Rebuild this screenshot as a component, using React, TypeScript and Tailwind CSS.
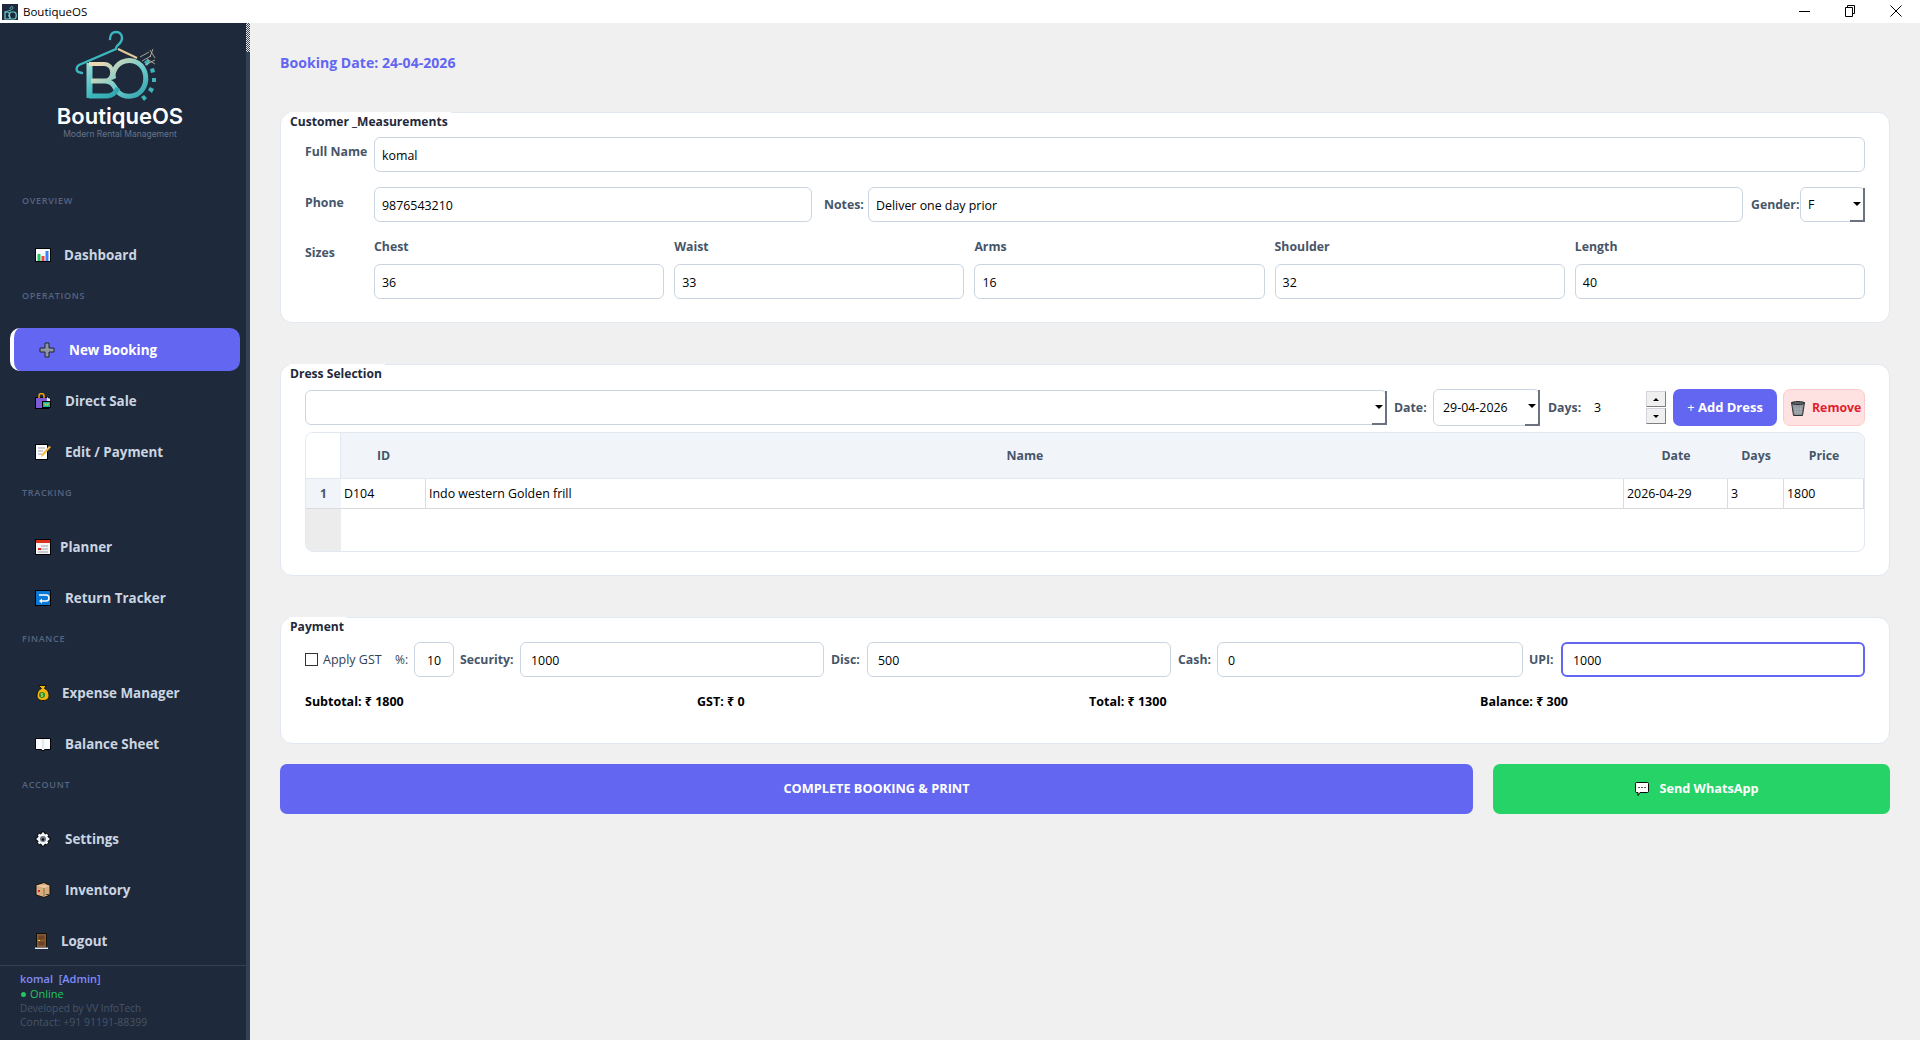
// BoutiqueOS desktop window, New Booking screen

import type { ReactNode } from 'react'

const FONT = "font-['Open_Sans','Noto_Sans','DejaVu_Sans',sans-serif]"

function Emoji({ children, className = 'w-4 h-4' }: { children: ReactNode; className?: string }) {
  return (
    <svg viewBox="0 0 16 16" className={`${className} shrink-0`}>
      {children}
    </svg>
  )
}

const icons: Record<string, ReactNode> = {
  chart: (
    <Emoji>
      <rect x="0.5" y="1.5" width="15" height="13" fill="#f8fafc" stroke="#000" />
      <rect x="2.5" y="7" width="3" height="7" fill="#22c55e" />
      <rect x="6.5" y="9" width="3" height="5" fill="#ef4444" />
      <rect x="10.5" y="4" width="3" height="10" fill="#3b82f6" />
    </Emoji>
  ),
  plus: (
    <Emoji>
      <path d="M6 1h4v5h5v4h-5v5H6v-5H1V6h5z" fill="#8f96a3" stroke="#23272f" strokeWidth="1" />
    </Emoji>
  ),
  bags: (
    <Emoji>
      <rect x="0.5" y="4.5" width="13" height="11" fill="#7c5cd6" stroke="#000" />
      <path d="M4 5V3a2.5 2.5 0 0 1 5 0v2" fill="none" stroke="#f59e0b" strokeWidth="1.5" />
      <rect x="7.5" y="8.5" width="8" height="6" fill="#14b8a6" stroke="#000" />
      <path d="M10 10v2h3v-2" fill="none" stroke="#facc15" />
      <path d="M12 4l3 2v2h-3z" fill="#e2e8f0" />
    </Emoji>
  ),
  memo: (
    <Emoji>
      <rect x="0.5" y="0.5" width="12" height="15" fill="#fff" stroke="#000" />
      <path d="M3 4h7M3 7h5M3 10h4" stroke="#9ca3af" />
      <path d="M6 13l1-3 7-8 2 1-7 8z" fill="#f5b942" />
    </Emoji>
  ),
  calendar: (
    <Emoji>
      <rect x="0.5" y="0.5" width="15" height="15" fill="#f5f5f4" stroke="#000" />
      <rect x="1" y="1" width="14" height="3" fill="#e0301e" />
      <path d="M6 7h7M3 10h10M3 13h10" stroke="#9ca3af" />
      <rect x="3" y="9" width="3" height="2" fill="#dc2626" />
    </Emoji>
  ),
  returnArrow: (
    <Emoji>
      <rect x="0.5" y="0.5" width="15" height="15" fill="#0a78d6" stroke="#000" />
      <path d="M4 5h7a2.5 2.5 0 0 1 0 6H5" fill="none" stroke="#fff" strokeWidth="1.5" />
      <path d="M7 8.5L4 11l3 2.5z" fill="#fff" />
    </Emoji>
  ),
  money: (
    <Emoji>
      <path d="M3 0.500h8l-1.500 3c3 1 4.500 4 4.500 7 0 3-2 5-6 5s-6-2-6-5c0-3 1.500-6 4.500-7z" fill="#f5b50a" stroke="#111" />
      <circle cx="7" cy="10" r="3" fill="#168a3a" />
      <path d="M8.200 8.700H6.200v1.300h1.600v1.300H5.800" fill="none" stroke="#f5e663" strokeWidth="0.800" />
    </Emoji>
  ),
  book: (
    <Emoji>
      <path d="M0.5 2.5h15v11h-6v1h-3v-1h-6z" fill="#f8fafc" stroke="#000" />
      <path d="M8 3v10" stroke="#cbd5e1" />
    </Emoji>
  ),
  gear: (
    <Emoji>
      <path
        d="M6.5 1h3l.5 2 1.7-.8 2 2-.8 1.800 2 .5v3l-2 .5.8 1.800-2 2-1.700-.8-.5 2h-3l-.5-2-1.700.8-2-2 .8-1.800-2-.5v-3l2-.5-.8-1.800 2-2L6 3z"
        fill="#f1f5f9"
        stroke="#000"
      />
      <circle cx="8" cy="8" r="3" fill="#6b7280" />
      <circle cx="8" cy="8.500" r="1.300" fill="#111" />
    </Emoji>
  ),
  box: (
    <Emoji>
      <path d="M1 3l8-2.500 6 3V13l-6 2.500L1 13z" fill="#d7ac7e" stroke="#111" />
      <path d="M1 3l8 3 6-2.500" fill="#eacda8" />
      <path d="M9 6v9" stroke="#8b6a45" />
      <rect x="3" y="8" width="2" height="2" fill="#dc2626" />
      <rect x="11" y="12" width="3" height="1" fill="#3f3f46" />
    </Emoji>
  ),
  door: (
    <Emoji>
      <rect x="1.500" y="0.500" width="10" height="14" fill="#8a5a33" stroke="#111" />
      <rect x="3.500" y="2.500" width="6" height="4" fill="#6b4226" />
      <rect x="3.500" y="8.500" width="6" height="4" fill="#6b4226" />
      <rect x="3" y="7" width="2" height="1" fill="#facc15" />
      <rect x="0" y="14.500" width="13" height="1.500" fill="#e5e7eb" />
    </Emoji>
  ),
}

type NavItem = { type: 'item'; label: string; icon: string; iconBox: string }
type NavHeading = { type: 'heading'; label: string }

const nav: (NavItem | NavHeading)[] = [
  { type: 'heading', label: 'OVERVIEW' },
  { type: 'item', label: 'Dashboard', icon: 'chart', iconBox: 'w-[29px]' },
  { type: 'heading', label: 'OPERATIONS' },
  { type: 'item', label: 'New Booking', icon: 'plus', iconBox: 'w-[30px]' },
  { type: 'item', label: 'Direct Sale', icon: 'bags', iconBox: 'w-[30px]' },
  { type: 'item', label: 'Edit / Payment', icon: 'memo', iconBox: 'w-[30px]' },
  { type: 'heading', label: 'TRACKING' },
  { type: 'item', label: 'Planner', icon: 'calendar', iconBox: 'w-[25px]' },
  { type: 'item', label: 'Return Tracker', icon: 'returnArrow', iconBox: 'w-[30px]' },
  { type: 'heading', label: 'FINANCE' },
  { type: 'item', label: 'Expense Manager', icon: 'money', iconBox: 'w-[27px]' },
  { type: 'item', label: 'Balance Sheet', icon: 'book', iconBox: 'w-[30px]' },
  { type: 'heading', label: 'ACCOUNT' },
  { type: 'item', label: 'Settings', icon: 'gear', iconBox: 'w-[30px]' },
  { type: 'item', label: 'Inventory', icon: 'box', iconBox: 'w-[30px]' },
  { type: 'item', label: 'Logout', icon: 'door', iconBox: 'w-[26px]' },
]

function Logo() {
  return (
    <svg viewBox="0 0 110 80" className="w-[110px] h-[80px]" fill="none">
      <defs>
        <linearGradient id="bo" gradientUnits="userSpaceOnUse" x1="20" y1="36" x2="60" y2="76">
          <stop offset="0" stopColor="#a9e4dc" />
          <stop offset="0.5" stopColor="#3fb8bd" />
          <stop offset="1" stopColor="#2a9aa4" />
        </linearGradient>
        <linearGradient id="cream" gradientUnits="userSpaceOnUse" x1="40" y1="34" x2="70" y2="74">
          <stop offset="0" stopColor="#ecd9b4" />
          <stop offset="0.6" stopColor="#6ccccb" />
          <stop offset="1" stopColor="#3aa9b1" />
        </linearGradient>
      </defs>
      {/* hanger */}
      <path
        d="M45 14c0-5 3-7 6-7 4 0 6 3 6 6 0 4-3 6-5 8-1 1-1 2-1 3L14 40c-3 2-3 5-1 7l4 1"
        stroke="#3db7bf"
        strokeWidth="2.400"
        strokeLinecap="round"
      />
      <path d="M53 24l19 9" stroke="#e2c99c" strokeWidth="2" />
      {/* B */}
      <path d="M24.500 38v35" stroke="url(#bo)" strokeWidth="6" />
      <path d="M24 39h15c11 0 11 17 0 17H26" stroke="url(#cream)" strokeWidth="4" />
      <path
        d="M26 56h14c8 0 9 6 13 11 6 6 18 6 24-2 6-8 5-21-4-27-8-5-19-2-23 6-3 5-2 8-1 10"
        stroke="url(#cream)"
        strokeWidth="5"
      />
      <path d="M24 71h18c6 0 9-4 11-8" stroke="url(#bo)" strokeWidth="5" />
      {/* gear teeth */}
      <path
        d="M79 37l4-3 2 3-3 4zM85 44l4-1 1 4-4 1zM87 53h4v4h-4zM85 62l4 2-2 4-4-3zM79 70l3 3-3 3-3-4z"
        fill="#3fb3ba"
      />
      {/* needle marks */}
      <path
        d="M75 32l9-5M77 36l9-5M80 40l10-5M85 25l5 8M88 24l-3 8M82 34l8 5"
        stroke="#c9c1a8"
        strokeWidth="0.800"
      />
    </svg>
  )
}

function Sidebar() {
  return (
    <aside className="flex w-[250px] shrink-0 bg-[#1e293b]">
      <div className="flex w-[246px] flex-col">
        <div className="mt-[2px] flex flex-col items-center pr-[6px]">
          <Logo />
          <div className="h-[24px] font-['Inter',sans-serif] text-[22px] font-semibold leading-[23px] text-white">
            BoutiqueOS
          </div>
          <div className="h-[10px] font-['Inter',sans-serif] text-[8.500px] leading-[10px] text-[#64748b]">
            Modern Rental Management
          </div>
        </div>
        <nav className="mt-[54px] flex flex-col">
          {nav.map((n) => {
            if (n.type === 'heading') {
              return (
                <div
                  key={n.label}
                  className="mb-[25px] mt-[4px] h-[15px] pl-[22px] text-[9px] font-semibold leading-[15px] tracking-[0.7px] text-[#566580] first:mt-0"
                >
                  {n.label}
                </div>
              )
            }
            const active = n.label === 'New Booking'
            return (
              <div
                key={n.label}
                className={
                  active
                    ? 'mx-[10px] mb-[8px] flex h-[43px] w-[230px] items-center rounded-[10px] border-l-[4px] border-white bg-[#6366f1] pl-[25px] text-[13.400px] font-bold text-white'
                    : 'mb-[8px] flex h-[43px] items-center pl-[35px] text-[13.400px] font-bold text-[#cbd5e1] last:mb-0'
                }
              >
                <span className={`flex ${n.iconBox}`}>{icons[n.icon]}</span>
                <span className="pt-px">{n.label}</span>
              </div>
            )
          })}
        </nav>
        <div className="mt-auto flex h-[75px] flex-col border-t border-[#334155] pl-[20px] pt-[5px]">
          <div className="h-[15px] text-[11px] font-semibold leading-[15px] text-[#818cf8]">komal&nbsp;&nbsp;[Admin]</div>
          <div className="flex h-[15px] items-center gap-[4px] pl-[1px] text-[11px] leading-[15px] text-[#22c55e]">
            <span className="mt-[1px] h-[5px] w-[5px] rounded-full bg-[#22c55e]" />
            Online
          </div>
          <div className="h-[15px] text-[10px] leading-[15px] text-[#475569]">Developed by VV InfoTech</div>
          <div className="h-[13px] text-[10.500px] leading-[13px] text-[#475569]">Contact: +91 91191-88399</div>
        </div>
      </div>
      <div className="w-[4px] bg-[#334155]">
        <div className="h-[29px] bg-[repeating-conic-gradient(#e5e7eb_0_25%,#374151_0_50%)] bg-[length:2px_2px]" />
      </div>
    </aside>
  )
}

function Field({ value, className = '' }: { value: string; className?: string }) {
  return (
    <input
      readOnly
      value={value}
      className={`h-[35px] rounded-[6px] border border-[#cbd5e1] bg-white px-[7px] pt-px text-[12.400px] text-black outline-none ${className}`}
    />
  )
}

function Label({ children, className = '' }: { children: ReactNode; className?: string }) {
  return <span className={`shrink-0 text-[12.300px] font-bold leading-[16px] text-[#475569] ${className}`}>{children}</span>
}

function Combo({ value, className = '' }: { value: string; className?: string }) {
  return (
    <div className={`relative flex items-center rounded-[6px] border border-[#cbd5e1] bg-white pl-[7px] pt-px text-[12.400px] text-black ${className}`}>
      {value}
      <div className="absolute -bottom-px -right-px top-0 w-[15px] border-b-2 border-r-2 border-[#6b7280]">
        <div className="absolute left-[3px] top-[14px] h-0 w-0 border-x-[4px] border-t-[4px] border-x-transparent border-t-black" />
      </div>
    </div>
  )
}

function Card({ title, children, className = '' }: { title: string; children: ReactNode; className?: string }) {
  return (
    <section className={`flex flex-col rounded-[12px] border border-[#e2e8f0] bg-white px-[24px] ${className}`}>
      <div className="-ml-[16px] -mt-px h-[20px] w-fit bg-white pl-[1px] pr-[3px] text-[12.100px] font-bold leading-[20px] text-[#1e293b]">
        {title}
      </div>
      {children}
    </section>
  )
}

function CustomerCard() {
  const sizes = [
    ['Chest', '36'],
    ['Waist', '33'],
    ['Arms', '16'],
    ['Shoulder', '32'],
    ['Length', '40'],
  ]
  return (
    <Card title="Customer _Measurements" className="h-[211px]">
      <div className="mt-[5px] flex">
        <Label className="w-[69px] pt-[7px]">Full Name</Label>
        <Field value="komal" className="flex-1" />
      </div>
      <div className="mt-[15px] flex items-center">
        <Label className="w-[69px] self-start pt-[8px]">Phone</Label>
        <Field value="9876543210" className="w-[438px]" />
        <Label className="ml-[12px] w-[44px]">Notes:</Label>
        <Field value="Deliver one day prior" className="min-w-0 flex-1" />
        <Label className="ml-[8px] w-[49px]">Gender:</Label>
        <Combo value="F" className="h-[35px] w-[65px]" />
      </div>
      <div className="mt-[16px] flex">
        <Label className="w-[69px] pt-[7px]">Sizes</Label>
        <div className="grid flex-1 grid-cols-5 gap-x-[10px]">
          {sizes.map(([label, value]) => (
            <div key={label} className="flex flex-col gap-[9px]">
              <Label className="pt-px">{label}</Label>
              <Field value={value} className="w-full" />
            </div>
          ))}
        </div>
      </div>
    </Card>
  )
}

function DressTable() {
  const cols = 'grid grid-cols-[35px_85px_1198px_104px_56px_80px]'
  const cell = 'flex items-center border-b border-r border-[#d8dbe0] pl-[3px] pt-px text-[12.400px] text-black'
  return (
    <div className="mt-[6px] flex h-[120px] flex-col overflow-hidden rounded-[8px] border border-[#e2e8f0]">
      <div className={`${cols} h-[46px] text-[12.300px] font-bold text-[#475569]`}>
        <div className="border-b border-r border-[#e2e8f0] bg-white" />
        {['ID', 'Name', 'Date', 'Days', 'Price'].map((h) => (
          <div key={h} className="flex items-center justify-center border-b border-[#e2e8f0] bg-[#f1f5f9] pt-px">
            {h}
          </div>
        ))}
      </div>
      <div className={`${cols} h-[30px]`}>
        <div className="flex items-center justify-center border-b border-[#d8dbe0] bg-[#f1f5f9] text-[12px] font-bold text-[#475569]">1</div>
        <div className={cell}>D104</div>
        <div className={cell}>Indo western Golden frill</div>
        <div className={cell}>2026-04-29</div>
        <div className={cell}>3</div>
        <div className={cell}>1800</div>
      </div>
      <div className="flex flex-1">
        <div className="w-[35px] bg-[#ececec]" />
      </div>
    </div>
  )
}

function SpinArrow({ down }: { down?: boolean }) {
  return (
    <div className="flex h-[16px] items-center justify-center border border-[#d1d5db] border-b-[#808080] border-r-[#808080] bg-[#f0f0f0]">
      <div
        className={
          down
            ? 'h-0 w-0 border-x-[3px] border-t-[3px] border-x-transparent border-t-black'
            : 'h-0 w-0 border-x-[3px] border-b-[3px] border-x-transparent border-b-black'
        }
      />
    </div>
  )
}

function DressCard() {
  return (
    <Card title="Dress Selection" className="mt-[41px] h-[212px]">
      <div className="mt-[5px] flex h-[37px] items-center">
        <Combo value="" className="h-[35px] min-w-0 flex-1" />
        <Label className="ml-[7px] w-[39px]">Date:</Label>
        <Combo value="29-04-2026" className="h-[37px] w-[107px] !pl-[9px]" />
        <Label className="ml-[8px] w-[46px]">Days:</Label>
        <span className="w-[52px] pt-px text-[12.400px] text-black">3</span>
        <div className="flex w-[20px] flex-col gap-[1px]">
          <SpinArrow />
          <SpinArrow down />
        </div>
        <button className="ml-[7px] h-[37px] w-[104px] rounded-[7px] bg-[#6366f1] text-[13px] font-bold text-white">
          <span className="font-normal">+</span> Add Dress
        </button>
        <button className="ml-[6px] flex h-[37px] w-[82px] items-center gap-[6px] rounded-[7px] border border-[#fecaca] bg-[#fee2e2] pl-[6px] pt-px text-[12.300px] font-bold text-[#e11d2e]">
          <Emoji>
            <path d="M1.500 2.500h13l-2 13h-9z" fill="#8c9499" stroke="#2b2f33" />
            <ellipse cx="8" cy="3" rx="6.500" ry="1.500" fill="#5b6369" stroke="#2b2f33" />
            <path d="M5 6l1 8M8 6v8M11 6l-1 8M4 9h8M4 12h8" stroke="#b4bbbf" strokeWidth="0.600" />
          </Emoji>
          Remove
        </button>
      </div>
      <DressTable />
    </Card>
  )
}

function PaymentCard() {
  return (
    <Card title="Payment" className="mt-[41px] h-[127px]">
      <div className="mt-[5px] flex h-[35px] items-center">
        <div className="h-[13px] w-[13px] shrink-0 border border-[#333] bg-white" />
        <span className="ml-[5px] w-[72px] shrink-0 pt-px text-[12.500px] text-[#334155]">Apply GST</span>
        <span className="w-[19px] shrink-0 text-[12px] text-[#334155]">%:</span>
        <Field value="10" className="w-[40px] text-center !px-0" />
        <Label className="ml-[6px] w-[60px]">Security:</Label>
        <Field value="1000" className="w-[304px] !pl-[10px]" />
        <Label className="ml-[7px] w-[36px]">Disc:</Label>
        <Field value="500" className="w-[304px] !pl-[10px]" />
        <Label className="ml-[7px] w-[39px]">Cash:</Label>
        <Field value="0" className="w-[306px] !pl-[10px]" />
        <Label className="ml-[6px] w-[32px]">UPI:</Label>
        <Field value="1000" className="min-w-0 flex-1 !border-2 !border-[#6366f1] !pl-[10px]" />
      </div>
      <div className="mt-[17px] grid grid-cols-[392px_392px_391px_1fr] text-[12.500px] font-bold leading-[16px] text-black">
        <span>Subtotal: ₹ 1800</span>
        <span>GST: ₹ 0</span>
        <span>Total: ₹ 1300</span>
        <span>Balance: ₹ 300</span>
      </div>
    </Card>
  )
}

export default function App() {
  return (
    <div className={`${FONT} flex h-[1040px] w-[1920px] flex-col overflow-hidden bg-[#f0f0f0]`}>
      <header className="flex h-[23px] shrink-0 items-center bg-white pl-[2px]">
        <svg viewBox="0 0 16 16" className="h-[16px] w-[16px]">
          <rect width="16" height="16" fill="#1e293b" />
          <path d="M8 5c0-3 3-3 3-1 0 1-1 1-2 2L3 8" fill="none" stroke="#5cc4c8" strokeWidth="0.900" />
          <path d="M3 8v7h3c3 0 3-3 0-3 2 0 2-4-1-4zM9 8h3c3 0 3 7 0 7H9c-2 0-2-7 0-7z" fill="none" stroke="#6fd0d0" strokeWidth="1.200" />
        </svg>
        <span className="ml-[5px] text-[11.500px] text-black">BoutiqueOS</span>
        <div className="ml-auto flex h-full items-center pr-[1px] text-black">
          <svg viewBox="0 0 46 23" className="h-[23px] w-[46px]">
            <path d="M18 11.500h11" stroke="#000" />
          </svg>
          <svg viewBox="0 0 46 23" className="h-[23px] w-[46px]">
            <path d="M18.500 7.500h7v9h-7zM20.500 7.500v-2h7v8h-2" fill="none" stroke="#000" />
          </svg>
          <svg viewBox="0 0 46 23" className="h-[23px] w-[46px]">
            <path d="M17.500 5.500l11 11M28.500 5.500l-11 11" stroke="#000" />
          </svg>
        </div>
      </header>
      <div className="flex min-h-0 flex-1">
        <Sidebar />
        <main className="flex min-w-0 flex-1 flex-col pl-[30px] pr-[30px] pt-[30px]">
          <div className="h-[20px] text-[14.100px] font-bold leading-[20px] text-[#6366f1]">Booking Date: 24-04-2026</div>
          <div className="mt-[39px] flex flex-col">
            <CustomerCard />
            <DressCard />
            <PaymentCard />
          </div>
          <div className="mt-[20px] flex gap-[20px]">
            <button className="h-[50px] w-[1193px] rounded-[7px] bg-[#6366f1] text-[12.750px] font-bold text-white">
              COMPLETE BOOKING &amp; PRINT
            </button>
            <button className="flex h-[50px] flex-1 items-center justify-center gap-[9px] rounded-[7px] bg-[#25d366] pl-[10px] text-[12.700px] font-bold text-white">
              <Emoji>
                <path d="M2.500 1.500h11a1 1 0 0 1 1 1v8a1 1 0 0 1-1 1H6l-2 3v-3H2.500a1 1 0 0 1-1-1v-8a1 1 0 0 1 1-1z" fill="#fff" stroke="#0a0a0a" />
                <path d="M4 6.500h8" stroke="#555" strokeDasharray="2 1" />
              </Emoji>
              Send WhatsApp
            </button>
          </div>
        </main>
      </div>
    </div>
  )
}
